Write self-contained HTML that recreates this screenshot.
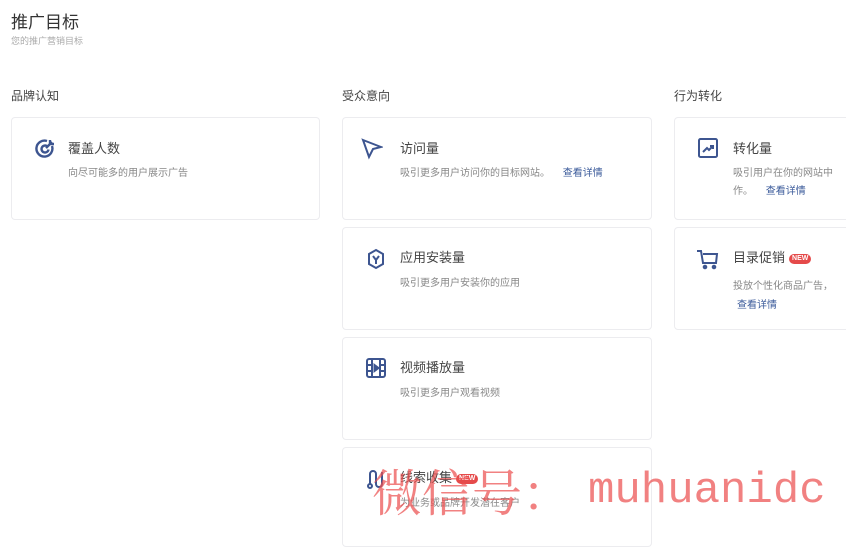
<!DOCTYPE html>
<html><head><meta charset="utf-8"><style>
body{margin:0;width:846px;height:528px;overflow:hidden;background:#fff;font-family:"Liberation Sans","Noto Sans CJK SC",sans-serif;position:relative;color:#333}
.a{position:absolute;white-space:nowrap}
.card{position:absolute;border:1px solid #ececef;border-radius:4px;background:#fff;box-sizing:border-box}
.t{font-size:13px;color:#444}
.d{font-size:10px;color:#888}
.l{color:#3a5a9a;margin-left:10px}
.new{display:inline-block;background:#e54a4a;color:#fff;font-size:7px;border-radius:6px;padding:0 3px;line-height:10px;vertical-align:2px;margin-left:4px;font-weight:bold}
svg{position:absolute}
.wm{color:rgba(235,80,80,0.72)}
</style></head><body>
<div class="a" style="left:11px;top:8px;font-size:17px;color:#333">推广目标</div>
<div class="a" style="left:11px;top:34px;font-size:9px;color:#aaa">您的推广营销目标</div>
<div class="a" style="left:11px;top:87px;font-size:12px;color:#444">品牌认知</div>
<div class="a" style="left:342px;top:87px;font-size:12px;color:#444">受众意向</div>
<div class="a" style="left:674px;top:87px;font-size:12px;color:#444">行为转化</div>

<div class="card" style="left:11px;top:117px;width:309px;height:103px"></div>
<svg style="left:35px;top:137px" width="22" height="22" viewBox="0 0 22 22" fill="none" stroke="#3d5590" stroke-width="2.4"><path d="M17 9a8 8 0 1 1-5-5"/><path d="M12.5 9.5a3.5 3.5 0 1 0 1 3"/><path d="M11 11l6-6M15 3v4h4"/></svg>
<div class="a t" style="left:68px;top:138px">覆盖人数</div>
<div class="a d" style="left:68px;top:164px">向尽可能多的用户展示广告</div>

<div class="card" style="left:342px;top:117px;width:310px;height:103px"></div>
<svg style="left:361px;top:138px" width="22" height="22" viewBox="0 0 22 22" fill="none" stroke="#3d5590" stroke-width="2"><path d="M2 2l18 7-8 2-4 8z"/></svg>
<div class="a t" style="left:400px;top:138px">访问量</div>
<div class="a d" style="left:400px;top:164px">吸引更多用户访问你的目标网站。 <span class="l">查看详情</span></div>

<div class="card" style="left:342px;top:227px;width:310px;height:103px"></div>
<svg style="left:366px;top:248px" width="20" height="22" viewBox="0 0 20 22" fill="none" stroke="#3d5590" stroke-width="2"><path d="M10 2l7 4v10l-7 4-7-4V6z"/><path d="M7 8l3 4 3-4M10 12v4"/></svg>
<div class="a t" style="left:400px;top:247px">应用安装量</div>
<div class="a d" style="left:400px;top:274px">吸引更多用户安装你的应用</div>

<div class="card" style="left:342px;top:337px;width:310px;height:103px"></div>
<svg style="left:365px;top:357px" width="22" height="22" viewBox="0 0 22 22" fill="none" stroke="#3d5590" stroke-width="2"><rect x="2" y="2" width="18" height="18" rx="2"/><path d="M7 2v18M15 2v18M2 8h5M2 14h5M15 8h5M15 14h5"/><path d="M9.5 8l4 3-4 3z" fill="#3d5590"/></svg>
<div class="a t" style="left:400px;top:357px">视频播放量</div>
<div class="a d" style="left:400px;top:384px">吸引更多用户观看视频</div>

<div class="card" style="left:342px;top:447px;width:310px;height:100px"></div>
<svg style="left:366px;top:468px" width="20" height="22" viewBox="0 0 20 22" fill="none" stroke="#3d5590" stroke-width="2"><circle cx="4" cy="18" r="2"/><path d="M4 16V6a3 3 0 0 1 6 0v10a3 3 0 0 0 6 0V4"/></svg>
<div class="a t" style="left:400px;top:467px">线索收集<span class="new">NEW</span></div>
<div class="a d" style="left:400px;top:494px">为业务或品牌开发潜在客户</div>

<div class="card" style="left:674px;top:117px;width:200px;height:103px"></div>
<svg style="left:697px;top:137px" width="22" height="22" viewBox="0 0 22 22" fill="none" stroke="#3d5590" stroke-width="2"><rect x="2" y="2" width="18" height="18" rx="1.5"/><path d="M6 15l4-4 2 2 4-4M13 9h3v3"/></svg>
<div class="a t" style="left:733px;top:138px">转化量</div>
<div class="a d" style="left:733px;top:164px">吸引用户在你的网站中</div>
<div class="a d" style="left:733px;top:182px">作。 <span class="l">查看详情</span></div>

<div class="card" style="left:674px;top:227px;width:200px;height:103px"></div>
<svg style="left:696px;top:248px" width="24" height="22" viewBox="0 0 24 22" fill="none" stroke="#3d5590" stroke-width="2"><path d="M1 3h4l2 12h13l1-9H7"/><circle cx="9" cy="19" r="1.3" fill="#3d5590"/><circle cx="18" cy="19" r="1.3" fill="#3d5590"/></svg>
<div class="a t" style="left:733px;top:247px">目录促销<span class="new">NEW</span></div>
<div class="a d" style="left:733px;top:277px">投放个性化商品广告，</div>
<div class="a d" style="left:737px;top:296px;color:#3a5a9a">查看详情</div>

<div class="a wm" style="left:372px;top:460px;font-size:50px;line-height:60px;font-family:'Noto Serif CJK SC',serif">微信号：</div>
<div class="a wm" style="left:588px;top:462px;font-size:44px;line-height:58px;font-family:'Liberation Mono',monospace">muhuanidc</div>
</body></html>
